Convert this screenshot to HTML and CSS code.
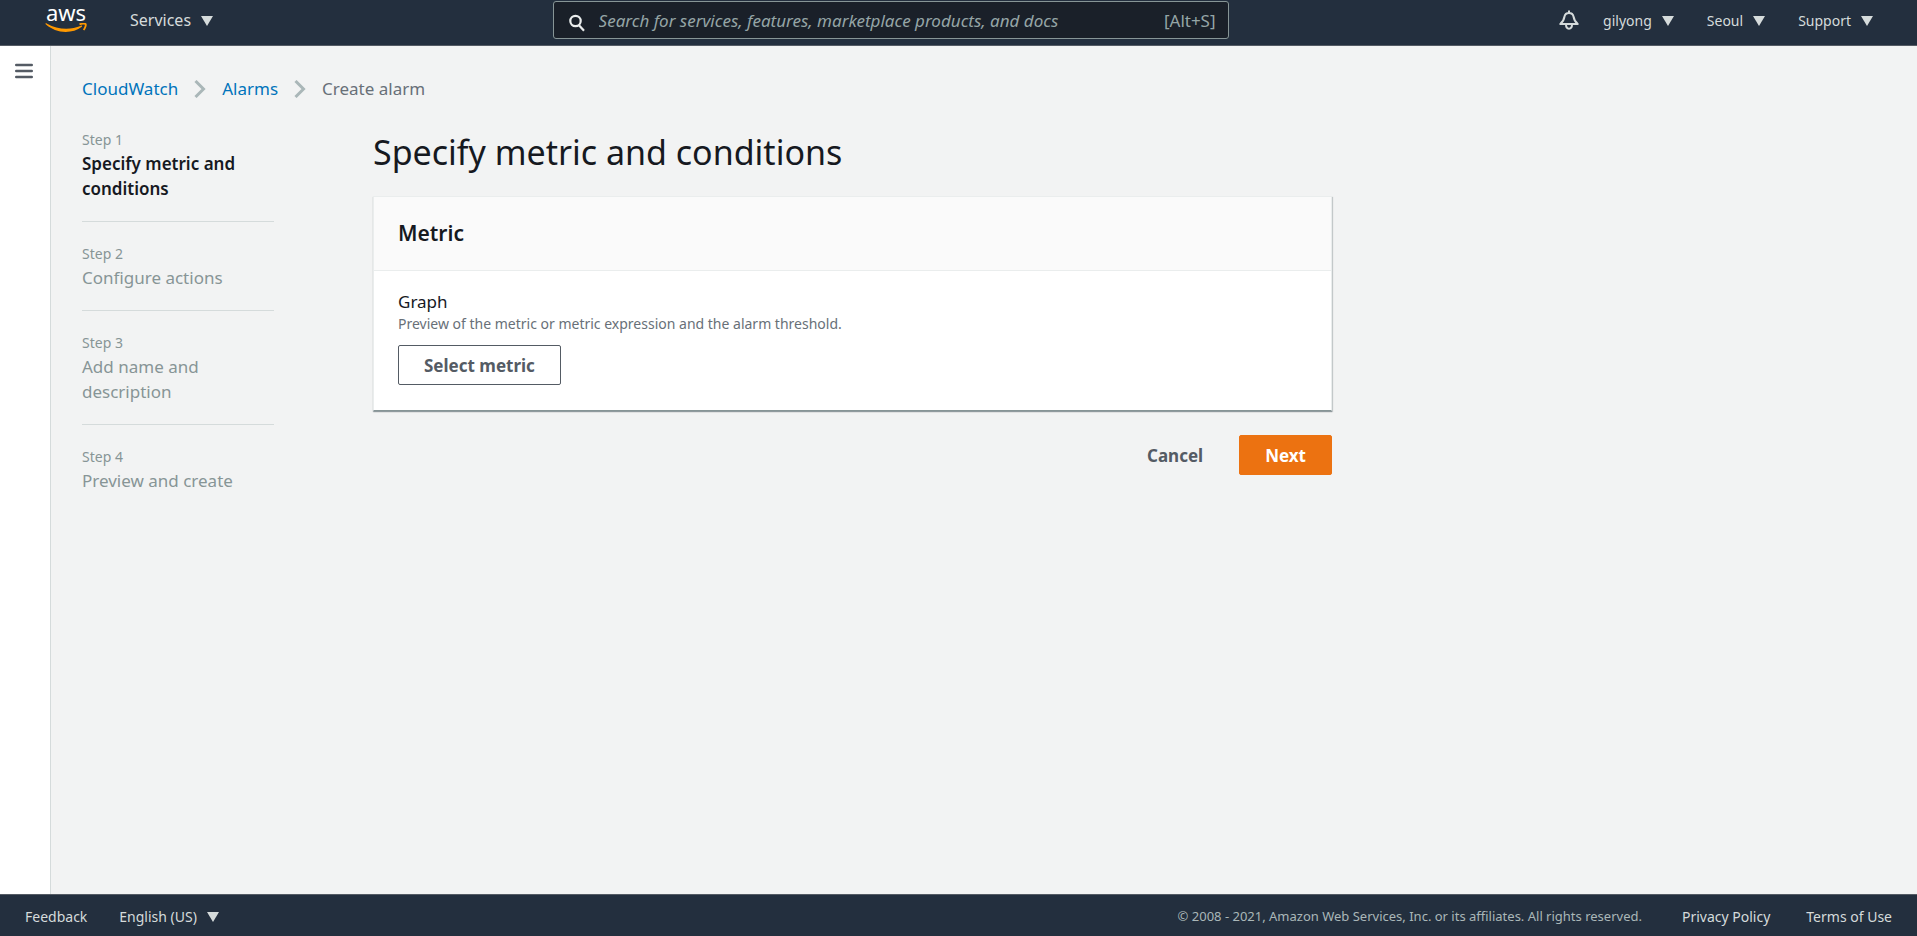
FILE: index.html
```html
<!DOCTYPE html>
<html lang="en">
<head>
    <meta charset="UTF-8">
    <meta name="viewport" content="width=device-width, initial-scale=1.0">
    <title>Create alarm - CloudWatch</title>
    <link rel="stylesheet" href="styles.css">
</head>
<body>

    <header class="topbar">
        <div class="topbar-left">
            <a class="logo" href="#" aria-label="AWS home">
                <span class="logo-text">aws</span>
                <svg class="logo-smile" width="42" height="10" viewBox="0 0 42 10" aria-hidden="true">
                    <path d="M0.5 0.6C0.9 0.1 1.5 0.3 2.1 0.7C8 4 14.5 5.7 21.3 5.7C26.2 5.7 31.3 4.6 36 2.7C36.9 2.3 37.6 3.2 36.8 3.8C32.5 7.2 26.500 9 20.8 9C13.2 9 6.2 6.2 1 1.6C0.5 1.2 0.3 0.9 0.5 0.6Z" fill="#f90"/>
                    <path d="M34.5 1.4C36.5 0.5 39.8 0.3 40.600 1C41.200 1.800 40.300 5 38.600 7" fill="none" stroke="#f90" stroke-width="1.8"/>
                </svg>
            </a>
            <button class="menu-button services">Services <span class="caret"></span></button>
        </div>

        <form class="search" role="search">
            <svg width="16" height="18" viewBox="0 0 16 18" fill="none" stroke="#eaeded" stroke-width="2.2" aria-hidden="true">
                <circle cx="6.5" cy="7" r="5.2"/>
                <path d="M10 11.2L15 16.8"/>
            </svg>
            <input type="search" aria-label="Search" placeholder="Search for services, features, marketplace products, and docs">
            <kbd>[Alt+S]</kbd>
        </form>

        <nav class="topbar-right">
            <button class="bell" aria-label="Notifications">
                <svg width="20" height="21" viewBox="0 0 20 21" fill="none" stroke="#d5dbdb" stroke-width="2" aria-hidden="true">
                    <path d="M10 0.5V3M0.5 14H19.5M1.5 13.5C4.5 11.5 5 9.5 5.5 6.5C6 4 7.5 3 10 3C12.5 3 14 4 14.5 6.5C15 9.5 15.5 11.5 18.5 13.5M7 14.5C7 20 13 20 13 14.5"/>
                </svg>
            </button>
            <button class="menu-button">gilyong <span class="caret"></span></button>
            <button class="menu-button">Seoul <span class="caret"></span></button>
            <button class="menu-button">Support <span class="caret"></span></button>
        </nav>
    </header>

    <div class="page">
        <aside class="sidebar">
            <button class="hamburger" aria-label="Open navigation">
                <svg width="18" height="16" viewBox="0 0 18 16" stroke="#545b64" stroke-width="2.4" stroke-linecap="round" aria-hidden="true">
                    <path d="M1.2 2H16.8M1.2 8H16.8M1.2 14H16.8"/>
                </svg>
            </button>
        </aside>

        <div class="content">
            <nav class="breadcrumb" aria-label="Breadcrumb">
                <a href="#">CloudWatch</a>
                <svg width="12" height="18" viewBox="0 0 12 18" aria-hidden="true"><path d="M1.5 1L9.5 9L1.5 17"/></svg>
                <a href="#">Alarms</a>
                <svg width="12" height="18" viewBox="0 0 12 18" aria-hidden="true"><path d="M1.5 1L9.5 9L1.5 17"/></svg>
                <span>Create alarm</span>
            </nav>

            <div class="wizard">
                <ol class="steps">
                    <li class="active"><small>Step 1</small><span>Specify metric and conditions</span></li>
                    <li><small>Step 2</small><span>Configure actions</span></li>
                    <li><small>Step 3</small><span>Add name and description</span></li>
                    <li><small>Step 4</small><span>Preview and create</span></li>
                </ol>

                <main class="form">
                    <h1>Specify metric and conditions</h1>
                    <section class="card">
                        <h2>Metric</h2>
                        <div class="card-body">
                            <div class="field-label">Graph</div>
                            <p class="hint">Preview of the metric or metric expression and the alarm threshold.</p>
                            <button class="btn">Select metric</button>
                        </div>
                    </section>
                    <div class="actions">
                        <button class="btn btn-link">Cancel</button>
                        <button class="btn btn-primary">Next</button>
                    </div>
                </main>
            </div>
        </div>
    </div>

    <footer class="footer">
        <a href="#">Feedback</a>
        <button class="menu-button">English (US) <span class="caret"></span></button>
        <span class="copyright">© 2008 - 2021, Amazon Web Services, Inc. or its affiliates. All rights reserved.</span>
        <div class="footer-links">
            <a href="#">Privacy Policy</a>
            <a href="#">Terms of Use</a>
        </div>
    </footer>

</body>
</html>
```
FILE: styles.css
```css
* {
    box-sizing: border-box;
}
body {
    margin: 0;
    min-height: 100vh;
    display: flex;
    flex-direction: column;
    font-family: "Noto Sans", "Open Sans", sans-serif;
    font-size: 17px;
    line-height: 25px;
    color: #16191f;
    background-color: #f2f3f3;
}
button, input, kbd {
    font: inherit;
}
button {
    cursor: pointer;
}
a {
    text-decoration: none;
}

/* Top bar */
.topbar {
    display: flex;
    justify-content: space-between;
    height: 46px;
    padding: 1px 44px 0 45px;
    background-color: #232f3e;
    border-bottom: 1px solid #545b64;
}
.topbar-left, .topbar-right {
    display: flex;
    align-items: center;
    height: 39px;
}
.topbar-left {
    gap: 43px;
    margin-right: 9px;
}
.topbar-right {
    gap: 33px;
}
.logo {
    display: flex;
    flex-direction: column;
    align-self: flex-start;
    align-items: center;
    width: 42px;
}
.logo-text {
    font-size: 22px;
    line-height: 22px;
    color: #fff;
}
.menu-button {
    display: flex;
    align-items: center;
    gap: 10px;
    padding: 0;
    border: none;
    background: none;
    color: #d5dbdb;
    font-size: 14px;
}
.services {
    font-size: 16px;
}
.caret {
    border-left: 6px solid transparent;
    border-right: 6px solid transparent;
    border-top: 10px solid #d5dbdb;
}
.bell {
    display: flex;
    margin-right: -9px;
    padding: 0;
    border: none;
    background: none;
}
.search {
    display: flex;
    align-items: center;
    gap: 14px;
    width: 676px;
    height: 38px;
    padding: 0 12px 0 15px;
    background-color: #1a2029;
    border: 1px solid #879596;
    border-radius: 3px;
}
.search svg {
    margin-top: 6px;
}
.search input {
    flex: 1;
    min-width: 0;
    padding: 0;
    border: none;
    outline: none;
    background: none;
    color: #fff;
}
.search input::placeholder {
    color: #95a5a6;
    font-style: italic;
    opacity: 1;
}
.search kbd {
    color: #95a5a6;
}

/* Page */
.page {
    flex: 1;
    display: flex;
}
.sidebar {
    width: 51px;
    padding: 17px 15px;
    background-color: #fff;
    border-right: 1px solid #d5dbdb;
}
.hamburger {
    display: block;
    padding: 0;
    border: none;
    background: none;
}
.hamburger svg {
    display: block;
}
.content {
    flex: 1;
    padding: 30px 31px;
}
.breadcrumb {
    display: flex;
    align-items: center;
    gap: 16px;
    color: #687078;
}
.breadcrumb a {
    color: #0073bb;
}
.breadcrumb svg {
    fill: none;
    stroke: #aab7b8;
    stroke-width: 3;
}
.wizard {
    display: flex;
    gap: 99px;
    margin-top: 27px;
}
.steps {
    flex: none;
    width: 192px;
    margin: 0;
    padding: 0;
    list-style: none;
    color: #879596;
}
.steps li {
    padding-bottom: 20px;
}
.steps li + li {
    padding-top: 20px;
    border-top: 1px solid #d5dbdb;
}
.steps small, .steps span {
    display: block;
}
.steps small {
    font-size: 14px;
    line-height: 23px;
}
.steps .active span {
    color: #16191f;
    font-weight: 600;
}
.form {
    flex: 1;
    max-width: 959px;
}
h1 {
    margin: 0 0 20px;
    font-size: 34px;
    font-weight: 400;
    line-height: 48px;
}
.card {
    background-color: #fff;
    border: 1px solid #eaeded;
    border-bottom-color: #879596;
    box-shadow: 0 1px 1px rgba(0, 28, 36, 0.3), 1px 1px 1px rgba(0, 28, 36, 0.15);
}
h2 {
    margin: 0;
    padding: 20px 24px;
    font-size: 21px;
    font-weight: 600;
    line-height: 33px;
    background-color: #fafafa;
    border-bottom: 1px solid #eaeded;
}
.card-body {
    padding: 18px 24px 25px;
}
.hint {
    margin: 0 0 11px;
    font-size: 14px;
    line-height: 20px;
    color: #687078;
}
.btn {
    height: 40px;
    padding: 0 25px;
    border: 1px solid #545b64;
    border-radius: 2px;
    background-color: #fff;
    color: #545b64;
    font-weight: 700;
}
.actions {
    display: flex;
    justify-content: flex-end;
    gap: 10px;
    margin-top: 24px;
}
.btn-link {
    border-color: transparent;
    background: none;
}
.btn-primary {
    border-color: #ec7211;
    background-color: #ec7211;
    color: #fff;
}

/* Footer */
.footer {
    display: flex;
    align-items: center;
    gap: 32px;
    height: 42px;
    padding: 2px 25px 0;
    font-size: 14px;
    background-color: #232f3e;
    border-top: 1px solid #545b64;
}
.footer a {
    color: #d5dbdb;
}
.footer-links {
    display: flex;
    gap: 36px;
    margin-left: 8px;
}
.copyright {
    margin-left: auto;
    color: #aab7b8;
    font-size: 13px;
}
```
